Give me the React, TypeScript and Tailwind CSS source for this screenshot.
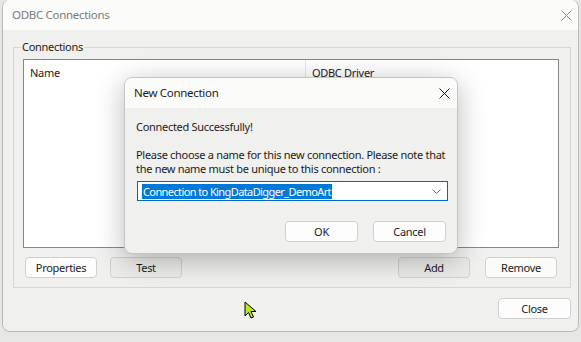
import React from "react";

const font = "font-['Noto_Sans',sans-serif] text-[11px] tracking-[-0.3px]";

const WinButton = ({
  label,
  className = "",
}: {
  label: string;
  className?: string;
}) => (
  <button
    className={`h-[21px] w-[72px] rounded-[4px] border border-[#d0d0d0] text-[11px] leading-none text-[#1b1b1b] ${className}`}
  >
    {label}
  </button>
);

const CloseIcon = ({ color = "#1b1b1b" }: { color?: string }) => (
  <svg width="11" height="11" viewBox="0 0 11 11">
    <path d="M0.5 0.5L10.5 10.5M10.5 0.5L0.5 10.5" stroke={color} strokeWidth="1" />
  </svg>
);

const Cursor = () => (
  <svg width="14" height="19" viewBox="0 0 14 19" className="absolute left-[244px] top-[301px]">
    <path
      d="M1 1 L1 15 L4.5 11.5 L7 17 L9.5 16 L7 10.5 L12 10.5 Z"
      fill="#b6e81c"
      stroke="#000"
      strokeWidth="1"
    />
  </svg>
);

export default function App() {
  return (
    <div className={`relative h-[342px] w-[581px] overflow-hidden bg-[#e6e6e5] ${font}`}>
      {/* main window */}
      <div className="ml-[2px] flex h-[332px] w-[577px] flex-col overflow-hidden rounded-lg border border-t-0 border-[#b9b9b9]">
        <div className="flex h-[30px] items-center justify-between bg-[#fbfbfa] pl-[9px] pr-[6px]">
          <span className="text-[11.5px] text-[#7a7a7a]">ODBC Connections</span>
          <CloseIcon color="#8a8a8a" />
        </div>
        <div className="flex flex-1 flex-col bg-[#f0f0ee] pt-[9px]">
          <fieldset className="ml-[10px] w-[558px] border border-[#d6d6d4] pb-[9px] pl-[9px] pr-[11px]">
            <legend className="-ml-[2px] px-[1px] leading-[16px] text-[#1b1b1b]">Connections</legend>
            <div className="mt-[4px] h-[189px] w-[536px] border border-[#85878c] bg-white">
              <div className="flex h-[24px] text-[#1b1b1b]">
                <div className="w-[282px] border-r border-[#e5e5e5] pl-[6px] pt-[5px]">Name</div>
                <div className="pl-[6px] pt-[5px]">ODBC Driver</div>
              </div>
            </div>
            <div className="mt-[9px] flex">
              <WinButton label="Properties" className="ml-[2px] bg-[#fdfdfd]" />
              <WinButton label="Test" className="ml-[13px] bg-[#ececeb]" />
              <WinButton label="Add" className="ml-[216px] bg-[#ebebea]" />
              <WinButton label="Remove" className="ml-[15px] bg-[#fbfbfa]" />
            </div>
          </fieldset>
          <div className="mt-[10px] flex justify-end pr-[7px]">
            <WinButton label="Close" className="w-[73px] bg-[#fdfdfd]" />
          </div>
        </div>
      </div>

      {/* New Connection dialog */}
      <div className="absolute left-[124px] top-[77px] flex h-[177px] w-[334px] flex-col overflow-hidden rounded-lg border border-[#c4c4c4] bg-[#f0f0ee] shadow-[0_6px_28px_rgba(0,0,0,0.28)]">
        <div className="flex h-[30px] shrink-0 items-center justify-between bg-[#fbfbfa] pl-[9px] pr-[7px]">
          <span className="text-[11.5px] text-[#1b1b1b]">New Connection</span>
          <CloseIcon />
        </div>
        <div className="flex flex-col px-[11px] pt-[11px] text-[#1b1b1b]">
          <p className="leading-[16px]">Connected Successfully!</p>
          <p className="mt-[13px] leading-[14px]">
            Please choose a name for this new connection. Please note that
            <br />
            the new name must be unique to this connection :
          </p>
          <div className="ml-[1px] mt-[5px] flex h-[20px] w-[311px] items-center justify-between border border-[#0067c0] bg-white pl-[4px] pr-[6px]">
            <span className="bg-[#0078d7] px-[1px] leading-[15px] tracking-[-0.6px] text-white">
              Connection to KingDataDigger_DemoArt
            </span>
            <svg width="9" height="5" viewBox="0 0 9 5">
              <path d="M0.5 0.5L4.5 4.5L8.5 0.5" fill="none" stroke="#6b6b6b" strokeWidth="1" />
            </svg>
          </div>
          <div className="mt-[20px] flex justify-end gap-[15px]">
            <WinButton label="OK" className="w-[73px] border-[#0067c0] bg-[#fdfdfd]" />
            <WinButton label="Cancel" className="w-[73px] bg-[#fdfdfd]" />
          </div>
        </div>
      </div>

      <Cursor />
    </div>
  );
}
